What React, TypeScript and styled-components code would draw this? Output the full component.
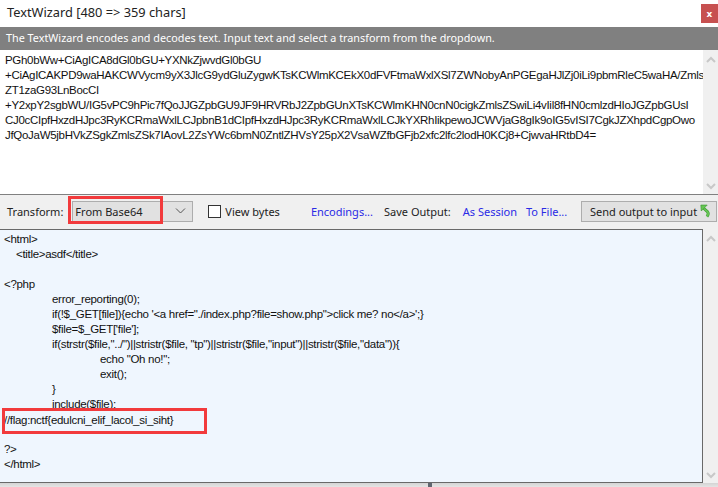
import { FC } from 'react';
import styled, { createGlobalStyle } from 'styled-components';

const GlobalStyle = createGlobalStyle`
  html, body {
    margin: 0;
    padding: 0;
    background: #fff;
  }
`;

const inputLines = [
  'PGh0bWw+CiAgICA8dGl0bGU+YXNkZjwvdGl0bGU',
  '+CiAgICAKPD9waHAKCWVycm9yX3JlcG9ydGluZygwKTsKCWlmKCEkX0dFVFtmaWxlXSl7ZWNobyAnPGEgaHJlZj0iLi9pbmRleC5waHA/Zmls',
  'ZT1zaG93LnBocCI',
  '+Y2xpY2sgbWU/IG5vPC9hPic7fQoJJGZpbGU9JF9HRVRbJ2ZpbGUnXTsKCWlmKHN0cnN0cigkZmlsZSwiLi4vIil8fHN0cmlzdHIoJGZpbGUsI',
  'CJ0cCIpfHxzdHJpc3RyKCRmaWxlLCJpbnB1dCIpfHxzdHJpc3RyKCRmaWxlLCJkYXRhIikpewoJCWVjaG8gIk9oIG5vISI7CgkJZXhpdCgpOwo',
  'JfQoJaW5jbHVkZSgkZmlsZSk7IAovL2ZsYWc6bmN0ZntlZHVsY25pX2VsaWZfbGFjb2xfc2lfc2lodH0KCj8+CjwvaHRtbD4=',
];

const outputLines: { text: string; indent: number }[] = [
  { text: '<html>', indent: 0 },
  { text: '<title>asdf</title>', indent: 12 },
  { text: '', indent: 0 },
  { text: '<?php', indent: 0 },
  { text: 'error_reporting(0);', indent: 48 },
  { text: `if(!$_GET[file]){echo '<a href="./index.php?file=show.php">click me? no</a>';}`, indent: 48 },
  { text: "$file=$_GET['file'];", indent: 48 },
  { text: 'if(strstr($file,"../")||stristr($file, "tp")||stristr($file,"input")||stristr($file,"data")){', indent: 48 },
  { text: 'echo "Oh no!";', indent: 96 },
  { text: 'exit();', indent: 96 },
  { text: '}', indent: 48 },
  { text: 'include($file);', indent: 48 },
  { text: '//flag:nctf{edulcni_elif_lacol_si_siht}', indent: 0 },
  { text: '', indent: 0 },
  { text: '?>', indent: 0 },
  { text: '</html>', indent: 0 },
];

const Window = styled.div`
  width: 718px;
  height: 487px;
  display: flex;
  flex-direction: column;
  overflow: hidden;
  background: #f0f0f0;
  font-family: 'Noto Sans', sans-serif;
  font-size: 11px;
  color: #1a1a1a;
`;

const TitleBar = styled.header`
  height: 27px;
  flex: none;
  display: flex;
  justify-content: space-between;
  background: #fff;
  padding-left: 7px;
`;

const Title = styled.h1`
  margin: 0;
  font-size: 12.8px;
  font-weight: 400;
  line-height: 24px;
  color: #222;
`;

const CloseButton = styled.button`
  width: 17px;
  height: 19px;
  margin-top: 4px;
  padding: 0;
  border: 0;
  background: #c75050;
  color: #fff;
  font-family: 'DejaVu Sans', sans-serif;
  font-size: 9px;
  font-weight: 700;
`;

const Banner = styled.div`
  height: 23px;
  flex: none;
  background: #808080;
  color: #fff;
  padding-left: 6px;
  font-size: 10.8px;
  line-height: 22px;
`;

const InputPane = styled.div`
  height: 144px;
  flex: none;
  display: flex;
  background: #fff;
  border-bottom: 1px solid #808080;
`;

const CodeText = styled.div`
  flex: 1;
  min-width: 0;
  font-family: 'Liberation Sans', Arial, sans-serif;
  font-size: 11.5px;
  letter-spacing: -0.3px;
  line-height: 15px;
  color: #111;
`;

const InputText = styled(CodeText)`
  padding: 3px 0 0 5px;
`;

const CodeLine = styled.div<{ $indent?: number }>`
  height: 15px;
  white-space: nowrap;
  padding-left: ${(p) => p.$indent ?? 0}px;
`;

const ScrollBar = styled.div`
  width: 15px;
  flex: none;
  display: flex;
  flex-direction: column;
  justify-content: space-between;
  align-items: center;
  background: #f0f0f0;
  padding: 6px 0 4px;
  color: #c8c8c8;
`;

const Toolbar = styled.div`
  height: 34px;
  flex: none;
  box-sizing: border-box;
  display: flex;
  align-items: center;
  padding: 0 1px 2px 7px;
`;

const Label = styled.span<{ $left: number }>`
  flex: none;
  margin-left: ${(p) => p.$left}px;
  white-space: nowrap;
  color: #222;
`;

const ToolLink = styled.a<{ $left: number }>`
  flex: none;
  margin-left: ${(p) => p.$left}px;
  white-space: nowrap;
  color: #2a2ae6;
`;

const SelectBox = styled.div`
  position: relative;
  flex: none;
  width: 121px;
  height: 21px;
  margin-left: 9px;
  box-sizing: border-box;
  display: flex;
  align-items: center;
  justify-content: space-between;
  padding: 0 6px 0 2px;
  background: #e1e1e1;
  border: 1px solid #adadad;
  color: #222;
`;

const RedFrame = styled.div`
  position: absolute;
  box-sizing: border-box;
  border: 3px solid #f23a3c;
  pointer-events: none;
`;

const SelectFrame = styled(RedFrame)`
  left: -5px;
  top: -6px;
  width: 95px;
  height: 28px;
`;

const FlagFrame = styled(RedFrame)`
  left: 2px;
  top: 178px;
  width: 205px;
  height: 26px;
`;

const CheckBox = styled.span`
  flex: none;
  width: 13px;
  height: 13px;
  margin-left: 15px;
  box-sizing: border-box;
  background: #fff;
  border: 1px solid #333;
`;

const SendButton = styled.button`
  flex: none;
  width: 136px;
  height: 21px;
  margin-left: auto;
  padding: 0 5px 0 8px;
  box-sizing: border-box;
  display: flex;
  align-items: center;
  justify-content: space-between;
  white-space: nowrap;
  background: #e1e1e1;
  border: 1px solid #adadad;
  font-family: 'Noto Sans', sans-serif;
  font-size: 11px;
  color: #222;
`;

const OutputPane = styled.div`
  height: 254px;
  flex: none;
  display: flex;
`;

const OutputText = styled(CodeText)`
  position: relative;
  background: #eff6fe;
  border: solid #696969;
  border-width: 1px 1px 1px 0;
  padding: 2px 0 0 4px;
  overflow: hidden;
`;

const FlagLine = styled(CodeLine)`
  position: relative;
  top: 1px;
`;

const Footer = styled.div`
  flex: 1;
  padding-left: 428px;
  background: linear-gradient(#d4d4d4, #e4e4e4);
`;

const Grip = styled.div`
  width: 4px;
  height: 100%;
  background: #5f6670;
`;

const Chevron: FC<{ up?: boolean }> = ({ up }) => (
  <svg width="10" height="7" viewBox="0 0 10 7" fill="none" stroke="currentColor" strokeWidth="2">
    <path d={up ? 'M1 6l4-4 4 4' : 'M1 1l4 4 4-4'} />
  </svg>
);

const SendIcon: FC = () => (
  <svg width="11" height="14" viewBox="0 0 13 16" fill="none">
    <path d="M4 4.500l5 4.500c1.200 1.500.8 3.500-.8 5.500" stroke="#3d9a35" strokeWidth="3.400" />
    <path d="M4 4.500l5 4.500c1.200 1.500.8 3.500-.8 5.500" stroke="#66c653" strokeWidth="2" />
    <path d="M1 1h7.500L1.500 8z" fill="#66c653" stroke="#3d9a35" strokeWidth="0.8" />
  </svg>
);

const App: FC = () => {
  return (
    <>
      <GlobalStyle />
      <Window>
        <TitleBar>
          <Title>TextWizard [480 =&gt; 359 chars]</Title>
          <CloseButton>x</CloseButton>
        </TitleBar>
        <Banner>The TextWizard encodes and decodes text. Input text and select a transform from the dropdown.</Banner>
        <InputPane>
          <InputText>
            {inputLines.map((line) => (
              <CodeLine key={line}>{line}</CodeLine>
            ))}
          </InputText>
          <ScrollBar>
            <Chevron up />
            <Chevron />
          </ScrollBar>
        </InputPane>
        <Toolbar>
          <Label $left={0}>Transform:</Label>
          <SelectBox>
            From Base64
            <svg width="11" height="6" viewBox="0 0 11 6" fill="none" stroke="#555" strokeWidth="1">
              <path d="M1 .5l4.500 4.500L10 .5" />
            </svg>
            <SelectFrame />
          </SelectBox>
          <CheckBox />
          <Label $left={4}>View bytes</Label>
          <ToolLink $left={31}>Encodings...</ToolLink>
          <Label $left={11}>Save Output:</Label>
          <ToolLink $left={12}>As Session</ToolLink>
          <ToolLink $left={9}>To File...</ToolLink>
          <SendButton>
            Send output to input
            <SendIcon />
          </SendButton>
        </Toolbar>
        <OutputPane>
          <OutputText>
            {outputLines.map((line, i) =>
              line.text.startsWith('//flag') ? (
                <FlagLine key={i}>{line.text}</FlagLine>
              ) : (
                <CodeLine key={i} $indent={line.indent}>
                  {line.text}
                </CodeLine>
              ),
            )}
            <FlagFrame />
          </OutputText>
          <ScrollBar>
            <Chevron up />
            <Chevron />
          </ScrollBar>
        </OutputPane>
        <Footer>
          <Grip />
        </Footer>
      </Window>
    </>
  );
};

export default App;
